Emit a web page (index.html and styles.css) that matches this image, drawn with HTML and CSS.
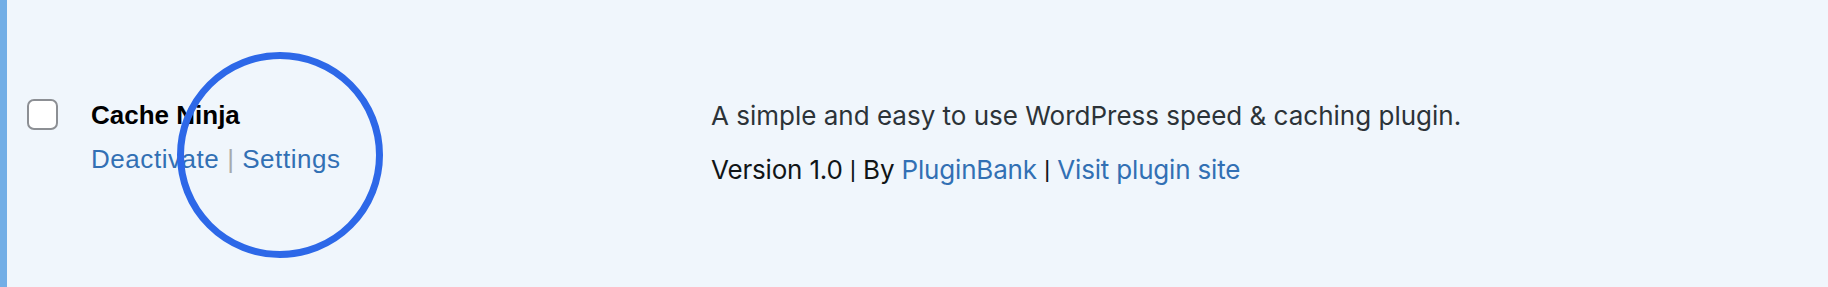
FILE: index.html
```html
<!DOCTYPE html>
<html lang="en">
<head>
<meta charset="utf-8">
<title>Plugins</title>
<link rel="stylesheet" href="styles.css">
</head>
<body>
<div class="row">
  <div class="check-col"><span class="checkbox"></span></div>
  <div class="title-col">
    <div class="plugin-title">Cache Ninja</div>
    <div class="row-actions"><a href="#">Deactivate</a> <span class="sep">|</span> <a href="#">Settings</a></div>
  </div>
  <div class="desc-col">
    <p class="desc">A simple and easy to use WordPress speed &amp; caching plugin.</p>
    <p class="meta">Version 1.0 <span class="pipe">|</span> By <a href="#">PluginBank</a> <span class="pipe">|</span> <a href="#">Visit plugin site</a></p>
  </div>
  <svg class="highlight" width="216" height="216" viewBox="0 0 216 216" aria-hidden="true">
    <circle cx="108" cy="108" r="99.5" fill="none" stroke="#2d68e8" stroke-width="7"/>
  </svg>
</div>
</body>
</html>
```
FILE: styles.css
```css
html, body {
  margin: 0;
  padding: 0;
  background: #f0f6fc;
}
.row {
  position: relative;
  box-sizing: border-box;
  height: 287px;
  display: flex;
  align-items: flex-start;
  padding-top: 97px;
  background: #f0f6fc;
  border-left: 7px solid #72aee6;
}
.check-col {
  width: 84px;
  padding-left: 20px;
  box-sizing: border-box;
  padding-top: 2px;
}
.checkbox {
  display: block;
  box-sizing: border-box;
  width: 31px;
  height: 31px;
  border: 2px solid #8c8f94;
  border-radius: 7px;
  background: #fff;
}
.title-col {
  width: 620px;
  font-family: "Liberation Sans", Arial, sans-serif;
}
.plugin-title {
  font-size: 26px;
  font-weight: 700;
  line-height: 36px;
  color: #000;
  margin-bottom: 8px;
}
.row-actions {
  font-size: 26px;
  letter-spacing: 0.55px;
  line-height: 36px;
  color: #a7aaad;
}
a {
  color: #3270b4;
  text-decoration: none;
}
.desc-col {
  font-family: Inter, Roboto, "Liberation Sans", sans-serif;
  font-size: 26px;
  line-height: 36px;
  padding-top: 1px;
}
.desc {
  margin: 0 0 18px;
  color: #2c3338;
}
.meta {
  margin: 0;
  color: #101517;
  letter-spacing: -0.18px;
}
.pipe {
  font-family: Roboto, "Liberation Sans", sans-serif;
}
.highlight {
  position: absolute;
  left: 165px;
  top: 47px;
}
```
